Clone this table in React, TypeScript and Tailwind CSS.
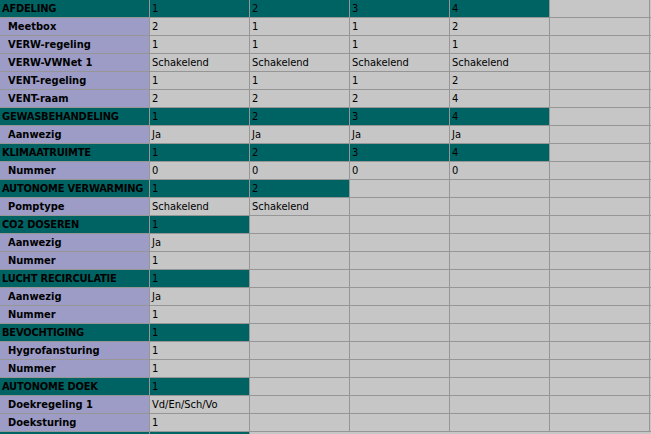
type Group = { title: string; n: number; rows: [string, string[]][] };

const groups: Group[] = [
  {
    title: "AFDELING",
    n: 4,
    rows: [
      ["Meetbox", ["2", "1", "1", "2"]],
      ["VERW-regeling", ["1", "1", "1", "1"]],
      ["VERW-VWNet 1", ["Schakelend", "Schakelend", "Schakelend", "Schakelend"]],
      ["VENT-regeling", ["1", "1", "1", "2"]],
      ["VENT-raam", ["2", "2", "2", "4"]],
    ],
  },
  { title: "GEWASBEHANDELING", n: 4, rows: [["Aanwezig", ["Ja", "Ja", "Ja", "Ja"]]] },
  { title: "KLIMAATRUIMTE", n: 4, rows: [["Nummer", ["0", "0", "0", "0"]]] },
  { title: "AUTONOME VERWARMING", n: 2, rows: [["Pomptype", ["Schakelend", "Schakelend"]]] },
  { title: "CO2 DOSEREN", n: 1, rows: [["Aanwezig", ["Ja"]], ["Nummer", ["1"]]] },
  { title: "LUCHT RECIRCULATIE", n: 1, rows: [["Aanwezig", ["Ja"]], ["Nummer", ["1"]]] },
  { title: "BEVOCHTIGING", n: 1, rows: [["Hygrofansturing", ["1"]], ["Nummer", ["1"]]] },
  { title: "AUTONOME DOEK", n: 1, rows: [["Doekregeling 1", ["Vd/En/Sch/Vo"]], ["Doeksturing", ["1"]]] },
];

const COLS = 5;

function HeaderRow({ title, n }: { title: string; n: number }) {
  return (
    <div className="flex h-[18px] border-b border-[#969696]">
      <div className="w-[150px] shrink-0 border-r border-[#969696] bg-[#006363] pl-[2px] font-bold leading-[17px] whitespace-nowrap tracking-[-0.2px]">
        {title}
      </div>
      {Array.from({ length: COLS }, (_, i) => (
        <div
          key={i}
          className={`w-[100px] shrink-0 border-r border-[#969696] pl-[2px] leading-[17px] ${i < n ? "bg-[#006363]" : ""}`}
        >
          {i < n ? i + 1 : ""}
        </div>
      ))}
    </div>
  );
}

function DataRow({ label, values }: { label: string; values: string[] }) {
  return (
    <div className="flex h-[18px] border-b border-[#969696]">
      <div className="w-[150px] shrink-0 border-r border-[#969696] bg-[#9c9cc6] pl-[8px] font-bold leading-[17px] whitespace-nowrap">
        {label}
      </div>
      {Array.from({ length: COLS }, (_, i) => (
        <div key={i} className="w-[100px] shrink-0 border-r border-[#969696] pl-[2px] leading-[17px] whitespace-nowrap">
          {values[i] ?? ""}
        </div>
      ))}
    </div>
  );
}

export default function App() {
  return (
    <div
      className="h-[434px] w-[651px] overflow-hidden bg-[#c6c6c6] text-[11px] text-black"
      style={{ fontFamily: '"DejaVu Sans Condensed", "DejaVu Sans", sans-serif' }}
    >
      {groups.map((g, gi) => (
        <div key={gi}>
          <HeaderRow title={g.title} n={g.n} />
          {g.rows.map(([label, values], ri) => (
            <DataRow key={ri} label={label} values={values} />
          ))}
        </div>
      ))}
      <div className="flex h-[18px]">
        <div className="w-[150px] shrink-0 border-r border-[#969696] bg-[#006363]" />
        <div className="w-[100px] shrink-0 border-r border-[#969696] bg-[#006363]" />
      </div>
    </div>
  );
}
